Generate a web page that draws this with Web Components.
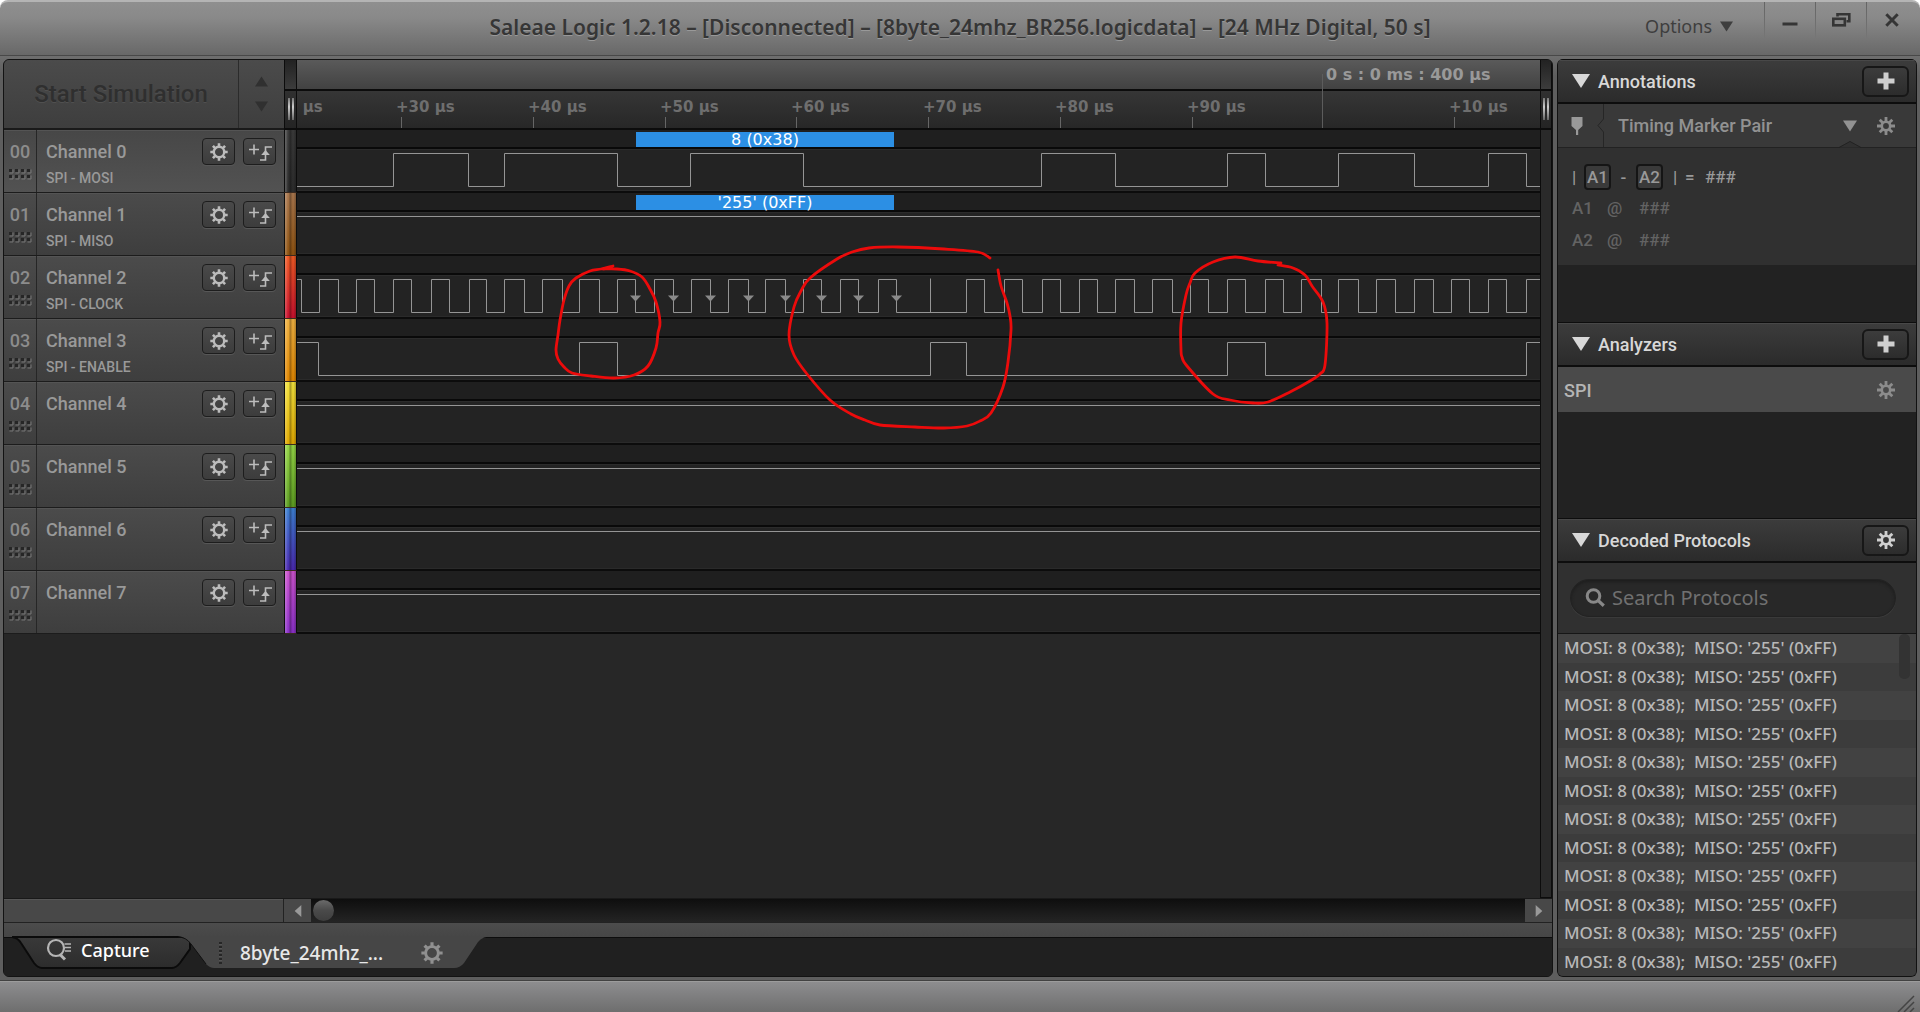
<!DOCTYPE html>
<html lang="en">
<head>
<meta charset="utf-8">
<title>Saleae Logic 1.2.18</title>
<style>
html, body { height: 100%; margin: 0; }
body { background: #fff; font-family: "Noto Sans", "Open Sans", sans-serif; }
</style>
</head>
<body>
<logic-app></logic-app>
<script>
const ICONS = {
  gear: { box: 18, body: '<g fill="none" stroke="currentColor"><circle cx="9" cy="9" r="5.2" stroke-width="2.4"/><path stroke-width="2.6" d="M9 3.2V.3M9 14.8v2.9M3.2 9H.3M14.8 9h2.9M4.9 4.9 2.9 2.9M13.1 4.9l2-2M4.9 13.1l-2 2M13.1 13.1l2 2"/></g>' },
  cog: { box: 18, body: '<g fill="none" stroke="currentColor"><circle cx="9" cy="9" r="4.2" stroke-width="2.6"/><path stroke-width="2.8" d="M9 4.5V0M9 13.5V18M4.5 9H0M13.5 9H18M5.8 5.8 2.7 2.7M12.2 5.8l3.1-3.1M5.8 12.2l-3.1 3.1M12.2 12.2l3.1 3.1"/></g>' },
  edge: { box: 24, body: '<path fill="none" stroke="currentColor" stroke-width="1.6" d="M1 9.500h10M6 4.500v10M12 20h5.500V7h6.500"/><path fill="currentColor" d="M13.200 15 17.500 10l4.300 5z"/>' },
  plus: { box: 18, body: '<path fill="none" stroke="currentColor" stroke-width="5" d="M9 .5v17M.5 9h17"/>' },
  down: { box: 18, body: '<path fill="currentColor" d="M0 2h18L9 16z"/>' },
  up: { box: 18, body: '<path fill="currentColor" d="M0 16h18L9 2z"/>' },
  left: { box: 18, body: '<path fill="currentColor" d="M14 0v18L4 9z"/>' },
  right: { box: 18, body: '<path fill="currentColor" d="M4 0v18L14 9z"/>' },
  pin: { box: 18, body: '<path fill="currentColor" d="M3.500 0h11v9l-4.300 4v5H8v-5L3.500 9z"/>' },
  search: { box: 20, body: '<circle cx="8.500" cy="8" r="6.300" fill="none" stroke="currentColor" stroke-width="3"/><path stroke="currentColor" stroke-width="3.200" d="m12.800 12.300 6 5.500"/>' },
  capture: { box: 26, body: '<g fill="none" stroke="currentColor"><circle cx="10" cy="11" r="8" stroke-width="2.200"/><path stroke-width="3" d="m14 17.500 5 5"/><path stroke-width="1.500" d="M18.500 7h6.500M19 10.500h6M19 14h6"/></g>' },
  min: { box: 16, body: '<path stroke="currentColor" stroke-width="3" d="M.5 12h15"/>' },
  restore: { box: 20, body: '<g fill="none" stroke="currentColor" stroke-width="2.600"><rect x="2.300" y="8.800" width="11.500" height="6.500"/><path d="M6.500 6.500V4.200h11.800v7H15.500"/></g>' },
  close: { box: 16, body: '<path stroke="currentColor" stroke-width="3.400" d="m1.500 1.500 13 13M14.500 1.500l-13 13"/>' },
  grip: { box: 24, body: '<g>' + [0, 6, 12, 18].map(x => [0, 6].map(y => `<rect x="${x + 1}" y="${y}" width="3" height="3" fill="#262626"/><path d="M${x + 5} ${y + .5}v3.500h-3.500" fill="none" stroke="#777"/>`).join('')).join('') + '</g>' },
};

class Part extends HTMLElement {
  constructor() {
    super();
    this.attachShadow({ mode: 'open' });
  }
  connectedCallback() {
    this.shadowRoot.innerHTML = `<style>
      * { box-sizing: border-box; }
      :host { box-sizing: border-box; display: block; }
      button { font: inherit; color: inherit; background: none; border: 0; padding: 0; margin: 0; }
      ${this.css()}</style>${this.html()}`;
  }
  css() { return ''; }
  html() { return ''; }
}

customElements.define('ui-icon', class extends Part {
  css() {
    const s = this.getAttribute('size') || 18;
    return `:host { flex: none; width: ${s}px; height: ${s}px; } svg { display: block; width: 100%; height: 100%; overflow: visible; }`;
  }
  html() {
    const i = ICONS[this.getAttribute('name')];
    return `<svg viewBox="0 0 ${i.box} ${i.box}" aria-hidden="true">${i.body}</svg>`;
  }
});

customElements.define('title-bar', class extends Part {
  css() {
    return `
    :host { flex: none; height: 56px; display: grid; grid-template-columns: 1fr auto 1fr;
      background: linear-gradient(#8f8f8f, #898989 30%, #686868); border-top: 2px solid #b4b4b4; border-bottom: 1px solid #484848;
      border-radius: 8px 8px 0 0; color: #363636; text-shadow: 0 1px 0 #999; }
    h1 { grid-column: 2; margin: 0; font-size: 21px; line-height: 50px; font-weight: 600; white-space: nowrap; }
    nav { display: flex; justify-content: flex-end; align-items: flex-start; padding-right: 3px; }
    .options { display: flex; align-items: center; gap: 8px; height: 48px; font-size: 18px; margin-right: 31px; color: #3e3e3e; }
    .win { width: 51px; height: 36px; display: grid; place-items: center; border-left: 1px solid;
      border-image: linear-gradient(#646464, #777) 1; color: #353535; }`;
  }
  html() {
    return `<h1>Saleae Logic 1.2.18 – [Disconnected] – [8byte_24mhz_BR256.logicdata] – [24 MHz Digital, 50 s]</h1>
    <nav><button class="options">Options <ui-icon name="down" size="13"></ui-icon></button>
    <button class="win" aria-label="Minimize"><ui-icon name="min" size="16"></ui-icon></button>
    <button class="win" aria-label="Restore"><ui-icon name="restore" size="20"></ui-icon></button>
    <button class="win" aria-label="Close"><ui-icon name="close" size="14"></ui-icon></button></nav>`;
  }
});

customElements.define('start-box', class extends Part {
  css() {
    return `
    :host { display: flex; height: 70px; background: linear-gradient(#4b4b4b, #3e3e3e); border-bottom: 2px solid #1a1a1a;
      font: 500 24px/32px Roboto, sans-serif; color: #303030; }
    .start { flex: 1; color: #2f2f2f; text-shadow: 0 1px 0 #505050; }
    .steps { width: 46px; display: flex; flex-direction: column; align-items: center; justify-content: center; gap: 12px; border-left: 1px solid #2b2b2b; }
    .steps button { display: block; }`;
  }
  html() {
    return `<button class="start" disabled>Start Simulation</button>
    <div class="steps"><button aria-label="Increase"><ui-icon name="up" size="13"></ui-icon></button>
    <button aria-label="Decrease"><ui-icon name="down" size="13"></ui-icon></button></div>`;
  }
});

customElements.define('channel-head', class extends Part {
  css() {
    return `
    :host { display: flex; height: 63px; border-bottom: 1px solid #1c1c1c; background: linear-gradient(#4b4b4b, #3e3e3e);
      box-shadow: inset 0 1px 0 #545454; font-family: Roboto, sans-serif; font-size: 18px; font-weight: 500; line-height: 24px; color: #999; }
    :host([selected]) { background: linear-gradient(#474747, #525252); }
    .no { width: 33px; flex: none; border-right: 1px solid #262626; display: flex; flex-direction: column; align-items: center; padding-top: 10px; gap: 5px; color: #8c8c8c; }
    .name { flex: 1; padding: 10px 0 0 9px; min-width: 0; }
    .name span { display: block; font-size: 14px; line-height: 18px; margin-top: 5px; }
    .tools { display: flex; gap: 8px; padding: 8px 8px 0 0; }
    .tools button { width: 33px; height: 27px; display: grid; place-items: center; border: 1px solid #1d1d1d; border-radius: 4px;
      background: linear-gradient(#4a4a4a, #3c3c3c); box-shadow: 0 1px 0 #575757; color: #bcbcbc; }`;
  }
  html() {
    return `<div class="no">${this.getAttribute('no')}<ui-icon name="grip" size="24"></ui-icon></div>
    <div class="name">${this.getAttribute('name')}<span>${this.getAttribute('role-name') || ''}</span></div>
    <div class="tools"><button aria-label="Channel settings"><ui-icon name="gear" size="18"></ui-icon></button>
    <button aria-label="Add trigger"><ui-icon name="edge" size="24"></ui-icon></button></div>`;
  }
});

// Screen x of the first visible sample; every time position below counts from the window's left edge.
const ORIGIN = 297;

customElements.define('time-ruler', class extends Part {
  css() {
    return `
    :host { height: 70px; border-bottom: 2px solid #0c0c0c; background: linear-gradient(#5a5a5a, #424242 29px, #0c0c0c 29px, #0c0c0c 31px, #363636 31px, #272727); }
    svg { display: block; width: 100%; height: 100%; font: bold 15px "DejaVu Sans", sans-serif; }
    .major { font-size: 16px; }`;
  }
  html() {
    const ticks = [[269, '+20 µs'], [401, '+30 µs'], [533, '+40 µs'], [665, '+50 µs'], [796, '+60 µs'], [928, '+70 µs'], [1060, '+80 µs'], [1192, '+90 µs'], [1454, '+10 µs']];
    return `<svg><g transform="translate(${-ORIGIN})">` + ticks.map(([x, t]) =>
      `<rect x="${x}" y="57" width="1" height="12" fill="#666"/><text x="${x - 5}" y="52" fill="#6e6e6e">${t}</text>`).join('') +
      `<rect x="1322" y="14" width="1" height="55" fill="#5c5c5c"/><text class="major" x="1326" y="20" fill="#999">0 s : 0 ms : 400 µs</text></g></svg>`;
  }
});

customElements.define('trace-row', class extends Part {
  css() {
    return `
    :host { height: 63px; border-bottom: 2px solid #0c0c0c; background: linear-gradient(#1f1f1f 17px, #090909 17px, #090909 19px, #2b2b2b 19px, #2b2b2b 20px, #232323 20px, #232323 60px, #2a2a2a 60px); }
    svg { display: block; width: 100%; height: 61px; font: 16px "DejaVu Sans", sans-serif; }`;
  }
  html() {
    const HIGH = 23.5, LOW = 56.5;
    let level = this.getAttribute('start') === 'low' ? LOW : HIGH;
    let d = `M${ORIGIN} ${level}`;
    for (const x of (this.getAttribute('edges') || '').split(' ').filter(Boolean)) {
      level = level === HIGH ? LOW : HIGH;
      d += `H${+x + .5}V${level}`;
    }
    d += 'H4000';
    const spike = this.getAttribute('spike');
    if (spike) d += `M${+spike + .5} ${LOW}V${HIGH - 1}`;
    const arrows = (this.getAttribute('arrows') || '').split(' ').filter(Boolean)
      .map(x => `<path d="M${+x - 5} 39.500h11l-5.500 6z" fill="#8a8a8a"/>`).join('');
    const tag = this.getAttribute('tag');
    const frame = tag ? `<rect x="636" y="2" width="258" height="15" fill="#2c8fe4"/><text x="765" y="15" fill="#fff" text-anchor="middle">${tag}</text>` : '';
    return `<svg><g transform="translate(${-ORIGIN})">${frame}<path d="${d}" fill="none" stroke="#959595"/>${arrows}</g></svg>`;
  }
});

customElements.define('red-marks', class extends Part {
  css() {
    return `:host { position: absolute; inset: 0; overflow: hidden; pointer-events: none; } svg { display: block; width: 100%; height: 100%; }`;
  }
  html() {
    const loops = [
      [[613,266],[601,269],[590,271],[576,278],[569,286],[564,300],[560,320],[558,335],[556,350],[558,359],[564,367],[572,373],[591,376],[614,378],[634,375],[648,366],[656,348],[658,333],[660,322],[656,302],[650,289],[642,277],[630,271],[617,269],[603,269]],
      [[998,270],[1001,286],[1007,303],[1010,316],[1011,330],[1008,362],[1003,387],[991,413],[980,421],[967,426],[944,428],[915,427],[880,425],[865,420],[851,414],[830,400],[807,374],[794,355],[789,335],[794,307],[801,291],[810,278],[837,259],[852,252],[869,248],[898,247],[944,249],[978,252],[990,258]],
      [[1281,263],[1258,261],[1235,257],[1213,262],[1195,273],[1190,283],[1186,295],[1181,323],[1181,350],[1182,357],[1187,366],[1213,394],[1230,400],[1253,403],[1268,402],[1290,392],[1310,381],[1320,374],[1325,365],[1327,323],[1323,302],[1312,286],[1305,275],[1293,268],[1278,265]],
    ];
    const smooth = p => {
      let d = `M${p[0]}`;
      for (let i = 0; i < p.length - 1; i++) {
        const a = p[i - 1] || p[i], b = p[i], c = p[i + 1], e = p[i + 2] || c;
        d += `C${b[0] + (c[0] - a[0]) / 6} ${b[1] + (c[1] - a[1]) / 6} ${c[0] - (e[0] - b[0]) / 6} ${c[1] - (e[1] - b[1]) / 6} ${c}`;
      }
      return d;
    };
    return `<svg><g transform="translate(${-ORIGIN} -130)" fill="none" stroke="#ec0b0b" stroke-width="2.800" stroke-linecap="round" stroke-linejoin="round">${loops.map(l => `<path d="${smooth(l)}"/>`).join('')}</g></svg>`;
  }
});

customElements.define('strip-handle', class extends Part {
  css() {
    return `
    :host { height: 70px; border: 1px solid #0c0c0c; border-width: 0 1px 2px; background: linear-gradient(#222, #3c3c3c 29px, #0c0c0c 29px, #0c0c0c 31px, #303030 31px, #242424);
      display: flex; justify-content: center; gap: 2px; padding-top: 38px; }
    i { width: 2px; height: 22px; background: linear-gradient(#777, #ccc 40%, #666); }`;
  }
  html() { return '<i></i><i></i>'; }
});

customElements.define('color-strip', class extends Part {
  css() {
    return `
    :host { display: flex; flex-direction: column; background: #272727; }
    div { height: 63px; border: 1px solid #0c0c0c; border-top: 0; border-bottom-color: #3a2a20; }`;
  }
  html() {
    return '<strip-handle></strip-handle>' + this.getAttribute('colors').split(' ').map(c => {
      const [a, b] = c.split('/');
      return `<div style="background: linear-gradient(90deg, #fff3 1px, #0000 3px, #0000 4px, #0005 5px, #0000 8px, #0004), linear-gradient(${a}, ${b})"></div>`;
    }).join('');
  }
});

customElements.define('end-strip', class extends Part {
  css() {
    return `:host { display: flex; flex-direction: column; width: 12px; } div { flex: 1; background: #2a2a2a; border: 1px solid #0c0c0c; border-top: 0; }`;
  }
  html() { return '<strip-handle></strip-handle><div></div>'; }
});

customElements.define('scroll-row', class extends Part {
  css() {
    return `
    :host { flex: none; height: 25px; display: flex; background: #484848; border-top: 1px solid #191919; border-bottom: 1px solid #222; }
    .blank { width: 280px; border-right: 1px solid #222; box-shadow: inset 0 1px #565656; }
    button { width: 27px; display: grid; place-items: center; color: #999; background: #484848; }
    input { flex: 1; min-width: 0; margin: 0; padding: 0 2px; appearance: none; background: linear-gradient(#0e0e0e, #242424); }
    input::-webkit-slider-thumb { appearance: none; width: 21px; height: 21px; border-radius: 50%; background: linear-gradient(#6a6a6a, #4a4a4a 50%, #3e3e3e); }`;
  }
  html() {
    return `<div class="blank"></div><button aria-label="Scroll left"><ui-icon name="left" size="12"></ui-icon></button>
    <input type="range" min="0" max="100" value="0" aria-label="Time position">
    <button aria-label="Scroll right"><ui-icon name="right" size="12"></ui-icon></button>`;
  }
});

customElements.define('tab-strip', class extends Part {
  css() {
    return `
    :host { flex: none; height: 53px; background: linear-gradient(#4c4c4c, #464646 14px, #0d0d0d 14px, #0d0d0d 15px, #202020 15px); display: flex; align-items: flex-start; padding: 13px 0 0 8px;
      font-size: 19px; font-weight: 500; line-height: 32px; color: #e8e8e8; }
    .tab { display: grid; height: 34px; flex: none; text-align: left; }
    .tab > * { grid-area: 1 / 1; }
    .capture { width: 180px; font-size: 18px; }
    .file { width: 316px; margin-left: -14px; }
    svg { display: block; width: 100%; height: 34px; }
    .label { display: flex; align-items: center; height: 28px; }
    .capture .label { gap: 9px; padding-left: 34px; color: #fff; }
    .capture ui-icon { color: #b5b5b5; }
    .file .label { padding-left: 41px; gap: 18px; height: 34px; }
    .dots { width: 3px; height: 22px; background: repeating-linear-gradient(#262626 0 2px, #555 2px 3px, #0000 3px 4px); }
    .file ui-icon { color: #909090; margin-left: 20px; }`;
  }
  html() {
    return `<button class="tab capture"><svg viewBox="0 0 180 34"><defs><linearGradient id="g" x2="0" y2="1"><stop stop-color="#393939"/><stop offset="1" stop-color="#2c2c2c"/></linearGradient></defs>
      <path d="M0 1Q6 2 9 7L22 27Q26 32 30 32H160Q164 32 168 27L178 13V1Z" fill="url(#g)" stroke="#0b0b0b" stroke-width="2"/></svg>
      <span class="label"><ui-icon name="capture" size="26"></ui-icon>Capture</span></button>
    <button class="tab file"><svg viewBox="0 0 316 34"><path d="M0 0Q8 1 13 8L28 28Q32 32 36 32H276Q282 32 286 27L300 6Q304 0 316 0Z" fill="#464646"/><path d="M0 1Q8 1 13 8L28 28" fill="none" stroke="#111"/></svg>
      <span class="label"><span class="dots"></span><span>8byte_24mhz_...</span><ui-icon name="gear" size="22"></ui-icon></span></button>`;
  }
});

const CLOCK = '301 319 338 356 374 393 411 431 449 469 486 504 524 542 562 579 599 617 635 654 673 691 710 728 748 765 785 803 821 840 858 878 896 966 984 1004 1022 1042 1060 1079 1097 1115 1134 1152 1172 1190 1208 1227 1245 1265 1283 1301 1321 1338 1358 1376 1395 1414 1433 1451 1469 1488 1506 1526';

customElements.define('capture-panel', class extends Part {
  css() {
    return `
    :host { flex: 1; min-width: 0; display: flex; flex-direction: column; background: #272727; border: 1px solid #131313; border-radius: 6px; overflow: hidden; }
    .main { flex: 1; min-height: 0; display: flex; }
    aside { width: 280px; flex: none; }
    color-strip { width: 13px; flex: none; }
    .scope { flex: 1; min-width: 0; }
    .traces { position: relative; }`;
  }
  html() {
    const roles = ['SPI - MOSI', 'SPI - MISO', 'SPI - CLOCK', 'SPI - ENABLE', '', '', '', ''];
    return `<div class="main">
      <aside><start-box></start-box>${roles.map((r, i) => `<channel-head no="0${i}" name="Channel ${i}" role-name="${r}" ${i ? '' : 'selected'}></channel-head>`).join('')}</aside>
      <color-strip colors="#3a3a3a/#2c2c2c #a8764d/#8f5310 #ef5a24/#c8102e #eeb040/#e08600 #f2e23c/#e0a800 #94d545/#5c9c20 #3b7fd0/#4a28b0 #cc52cc/#8a30c8"></color-strip>
      <div class="scope"><time-ruler></time-ruler><div class="traces">
        <trace-row start="low" edges="393 468 504 617 690 803 1041 1115 1227 1265 1338 1414 1488 1526" tag="8 (0x38)"></trace-row>
        <trace-row tag="'255' (0xFF)"></trace-row>
        <trace-row edges="${CLOCK}" spike="930" arrows="635 673 710 748 785 821 858 896"></trace-row>
        <trace-row edges="318 579 617 930 966 1227 1265 1526"></trace-row>
        <trace-row></trace-row><trace-row></trace-row><trace-row></trace-row><trace-row></trace-row>
        <red-marks></red-marks></div></div>
      <end-strip></end-strip></div>
      <scroll-row></scroll-row><tab-strip></tab-strip>`;
  }
});

customElements.define('side-section', class extends Part {
  css() {
    return `
    :host { display: flex; flex-direction: column; min-width: 0; min-height: 0; background: #222; }
    header { flex: none; height: 45px; display: flex; align-items: center; gap: 8px; padding: 0 7px 0 14px; border-top: 1px solid #0d0d0d; border-bottom: 2px solid #0d0d0d;
      background: linear-gradient(#3c3c3c, #2b2b2b); box-shadow: inset 0 1px #484848; font: 500 18px/24px Roboto, sans-serif; color: #d8d8d8; }
    h2 { flex: 1; margin: 0; padding-top: 2px; font: inherit; }
    header > button { width: 47px; height: 31px; display: grid; place-items: center; border: 2px solid #171717; border-radius: 6px; background: linear-gradient(#3c3c3c, #2c2c2c); color: #cfcfcf; }`;
  }
  html() {
    const t = this.getAttribute('heading');
    return `<header><ui-icon name="down" size="18"></ui-icon><h2>${t}</h2><button aria-label="${t} action"><ui-icon name="${this.getAttribute('action')}" size="18"></ui-icon></button></header><slot></slot>`;
  }
});

customElements.define('timing-pair', class extends Part {
  css() {
    return `
    :host { font: 500 18px/24px Roboto, sans-serif; color: #929292; }
    .bar { display: flex; align-items: center; height: 43px; background: #393939; }
    .pin { width: 39px; padding-left: 10px; color: #999; }
    .chev { width: 7px; height: 43px; flex: none; }
    .pick { flex: 1; display: grid; align-items: center; color: #929292; }
    .pick > * { grid-area: 1 / 1; }
    select { appearance: none; font: inherit; color: inherit; background: none; border: 0; padding: 0 0 0 14px; width: 100%; }
    .pick ui-icon { justify-self: end; pointer-events: none; }
    .bar button { margin: 0 21px 0 20px; color: #8c8c8c; }
    .line { display: flex; align-items: flex-end; margin-top: -6px; height: 7px; }
    .line i { border-bottom: 1px solid #222; }
    .line i:first-child { flex: 1; } .line i:last-child { width: 55px; }
    .line svg { width: 22px; height: 7px; display: block; }
    .body { background: #303030; padding: 14px 14px 8px; font-size: 17px; line-height: 32px; height: 117px; color: #636363; }
    .diff { display: flex; align-items: center; height: 30px; color: #999; }
    .diff span { width: 12px; }
    .diff .mid { width: 25px; text-align: center; }
    .diff .eq { width: 20px; }
    .diff .bar2 { width: 12px; margin-left: 10px; }
    .diff b { font-weight: 500; width: 27px; line-height: 22px; text-align: center; border: 2px solid #151515; border-radius: 4px; background: #3a3a3a; }
    .at { display: grid; grid-template-columns: 35px 32px auto; }`;
  }
  html() {
    return `<div class="bar"><div class="pin"><ui-icon name="pin" size="18"></ui-icon></div>
      <svg class="chev" viewBox="0 0 7 43"><path d="M6.500 0V15L1 21.500 6.500 28V43" fill="none" stroke="#262626"/></svg>
      <div class="pick"><select aria-label="Annotation type"><option>Timing Marker Pair</option></select><ui-icon name="down" size="14"></ui-icon></div>
      <button aria-label="Marker settings"><ui-icon name="cog" size="18"></ui-icon></button></div>
      <div class="line"><i></i><svg viewBox="0 0 22 7"><path d="M0 6.500 11 .5l11 6z" fill="#303030"/><path d="M0 6.500 11 .5l11 6" fill="none" stroke="#222"/></svg><i></i></div>
      <div class="body"><div class="diff"><span>|</span><b>A1</b><span class="mid">-</span><b>A2</b><span class="bar2">|</span><span class="eq">=</span>###</div>
      <div class="at"><span>A1</span><span>@</span><span>###</span></div><div class="at"><span>A2</span><span>@</span><span>###</span></div></div>`;
  }
});

customElements.define('analyzer-row', class extends Part {
  css() {
    return `:host { display: flex; align-items: center; justify-content: space-between; height: 45px; padding: 0 21px 0 6px; background: #4a4a4a; font: 500 18px/24px Roboto, sans-serif; color: #b5b5b5; }
    span { padding-top: 2px; }
    button { color: #8c8c8c; }`;
  }
  html() { return `<span><slot></slot></span><button aria-label="Analyzer settings"><ui-icon name="cog" size="18"></ui-icon></button>`; }
});

customElements.define('protocol-list', class extends Part {
  css() {
    return `
    :host { flex: 1; min-height: 0; display: flex; flex-direction: column; background: #303030; }
    label { flex: none; display: flex; align-items: center; gap: 7px; height: 38px; margin: 16px 20px 16px 12px; padding: 0 14px; border-radius: 19px; border: 1px solid #222; background: #282828;
      box-shadow: inset 0 2px 3px #1e1e1e, 0 1px #3a3a3a; color: #888; }
    input { flex: 1; min-width: 0; border: 0; padding: 0; outline: 0; background: none; font: 20px/28px "Noto Sans", sans-serif; color: #aaa; }
    input::placeholder { color: #707070; opacity: 1; }
    .rows { position: relative; flex: 1; min-height: 0; border-top: 1px solid #161616; display: flex; }
    ul { flex: 1; display: flex; flex-direction: column; margin: 0; padding: 0; list-style: none; }
    li { flex: 1; display: flex; align-items: center; padding-left: 6px; font-size: 17px; font-weight: 500; line-height: 24px; white-space: pre; color: #b8b8b8; background: #424242; }
    li:nth-child(even) { background: #3c3c3c; }
    .thumb { position: absolute; top: 0; right: 6px; width: 11px; height: 45px; border-radius: 5px; background: #333; }`;
  }
  html() {
    return `<label><ui-icon name="search" size="20"></ui-icon><input type="text" placeholder="Search Protocols" aria-label="Search Protocols"></label>
    <div class="rows"><ul>${"<li>MOSI: 8 (0x38);  MISO: '255' (0xFF)</li>".repeat(12)}</ul><div class="thumb"></div></div>`;
  }
});

customElements.define('side-panel', class extends Part {
  css() {
    return `:host { width: 360px; flex: none; display: grid; grid-template-columns: minmax(0, 1fr); grid-template-rows: 263px 196px minmax(0, 1fr); border: 1px solid #111; border-top: 0; border-radius: 6px; overflow: hidden; }`;
  }
  html() {
    return `<side-section heading="Annotations" action="plus"><timing-pair></timing-pair></side-section>
    <side-section heading="Analyzers" action="plus"><analyzer-row>SPI</analyzer-row></side-section>
    <side-section heading="Decoded Protocols" action="cog"><protocol-list></protocol-list></side-section>`;
  }
});

customElements.define('status-bar', class extends Part {
  css() {
    return `:host { flex: none; height: 32px; display: flex; justify-content: flex-end; align-items: flex-end; padding-right: 5px; background: linear-gradient(#8e8e90, #6e6e6e); border-top: 1px solid #424242; box-shadow: inset 0 1px #9c9c9c; }
    svg { width: 20px; height: 17px; display: block; }`;
  }
  html() { return `<svg viewBox="0 0 20 17"><path d="M3 17 19 1M9 17l10-10M15 17l4-4" stroke="#444" stroke-width="1.500"/></svg>`; }
});

customElements.define('logic-app', class extends Part {
  css() {
    return `:host { height: 100%; display: flex; flex-direction: column; }
    main { flex: 1; min-height: 0; display: flex; gap: 4px; padding: 3px; background: linear-gradient(#6e6e6e, #5e5e5e 20px); }`;
  }
  html() { return `<title-bar></title-bar><main><capture-panel></capture-panel><side-panel></side-panel></main><status-bar></status-bar>`; }
});
</script>
</body>
</html>
